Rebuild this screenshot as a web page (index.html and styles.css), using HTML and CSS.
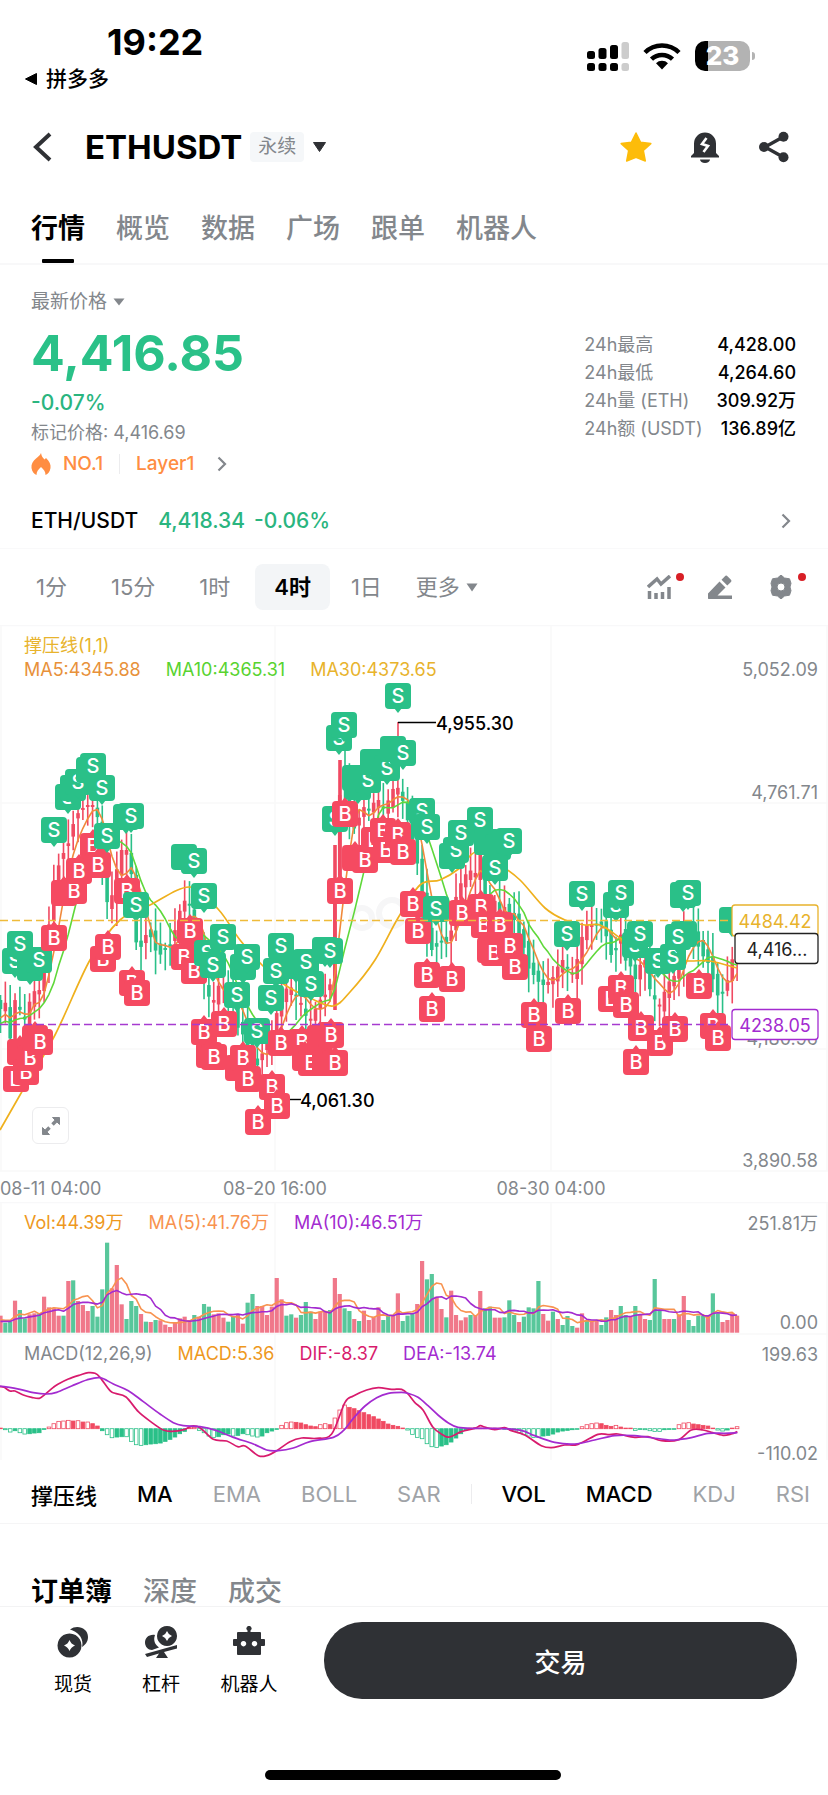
FILE: index.html
```html
<!DOCTYPE html>
<html lang="zh-CN">
<head>
<meta charset="utf-8">
<meta name="viewport" content="width=device-width, initial-scale=1">
<title>ETHUSDT 永续</title>
<link rel="stylesheet" href="styles.css">
</head>
<body>
<div class="status">
  <div class="status-left">
    <div class="clock">19:22</div>
    <a class="back-app" href="#"><svg width="14" height="14" viewBox="0 0 13 14"><path d="M12 1.5v11L1 7z" fill="#000" stroke="#000" stroke-linejoin="round"/></svg>拼多多</a>
  </div>
  <div class="status-right">
    <svg width="42" height="30" viewBox="0 0 42 30">
      <g fill="#000"><rect x="0" y="10" width="8" height="8" rx="2.5"/><rect x="11.5" y="7" width="8" height="11" rx="2.5"/><rect x="23" y="4" width="8" height="14" rx="2.5"/><rect x="0" y="22" width="8" height="8" rx="2.5"/><rect x="11.5" y="22" width="8" height="8" rx="2.5"/><rect x="23" y="22" width="8" height="8" rx="2.5"/></g>
      <g fill="#ccc"><rect x="34.5" y="1" width="7.5" height="17" rx="2.5"/><rect x="34.5" y="22" width="7.5" height="8" rx="2.5"/></g>
    </svg>
    <svg class="wifi" width="38" height="28" viewBox="0 0 38 28"><g fill="none" stroke="#000" stroke-width="4.5"><path d="M2 10.5a24 24 0 0 1 34 0"/><path d="M8.5 17.2a15 15 0 0 1 21 0"/></g><path d="M19 27.5l-6-6.3a8.5 8.5 0 0 1 12 0z"/></svg>
    <div class="battery"><span>23</span></div>
  </div>
</div>

<header class="header">
  <a class="back" href="#" aria-label="返回"><svg width="20" height="30" viewBox="0 0 20 30"><path d="M18 2L4 15l14 13" fill="none" stroke="#2f3135" stroke-width="4"/></svg></a>
  <h1 class="symbol">ETHUSDT</h1>
  <button class="contract" type="button"><span class="tag">永续</span><svg width="15" height="10" viewBox="0 0 14 10"><path d="M1 .5h12L7 9.5z" fill="#2f3135" stroke="#2f3135" stroke-linejoin="round"/></svg></button>
  <div class="header-actions">
    <button type="button" aria-label="收藏"><svg width="32" height="32" viewBox="0 0 32 32"><path d="M16 2l4.600 9.300 10.200 1.300-7.500 6.900 2 10.500L16 26.400 6.700 30l2-10.500-7.500-6.900 10.200-1.300z" fill="#fdbc0a" stroke="#fdbc0a" stroke-width="1.5" stroke-linejoin="round"/></svg></button>
    <button type="button" aria-label="提醒"><svg width="32" height="32" viewBox="0 0 32 32"><path d="M5 22V12.500a11 11 0 0 1 22 0V22l3 3v1.500H2V25z" fill="#2f3135"/><path d="M11 28.500h10a5 3.500 0 0 1-10 0z" fill="#2f3135"/><path d="M17.500 7l-4.500 6 6 2-4.500 6" fill="none" stroke="#fff" stroke-width="2.600"/></svg></button>
    <button type="button" aria-label="分享"><svg width="32" height="32" viewBox="0 0 32 32"><path d="M25 6L7 16l18 10" fill="none" stroke="#2f3135" stroke-width="3.500"/><g fill="#2f3135"><circle cx="25.500" cy="5.800" r="5"/><circle cx="6" cy="16" r="5"/><circle cx="25.500" cy="26.200" r="5"/></g></svg></button>
  </div>
</header>

<nav class="tabs">
  <a class="active" href="#">行情</a><a href="#">概览</a><a href="#">数据</a><a href="#">广场</a><a href="#">跟单</a><a href="#">机器人</a>
</nav>

<main>
  <section class="quote">
    <div class="quote-main">
      <button class="price-type" type="button">最新价格<svg width="12" height="8" viewBox="0 0 12 8"><path d="M.5 .5h11L6 7.500z" fill="#83878c"/></svg></button>
      <div class="price">4,416.85</div>
      <div class="change">-0.07%</div>
      <div class="mark">标记价格: 4,416.69</div>
      <a class="ranks" href="#">
        <svg width="20" height="24" viewBox="0 0 20 24"><path d="M10 1c.5 3.500 2 5 3.500 6.500L15 6c3.500 3.500 5 6.500 4.500 10-.5 3.500-2.500 6-5 7 0-3-1.500-5.500-4.500-8-3 2.500-4.500 5-4.500 8-2.500-1-4.500-3.500-5-7C0 12 2 9 5 6.500 7 4.800 9 3.500 10 1z" fill="#ff8d42"/></svg>
        <span>NO.1</span><i class="bar"></i><span>Layer1</span>
        <svg class="more" width="10" height="16" viewBox="0 0 10 16"><path d="M1.500 1.500L8 8l-6.500 6.500" fill="none" stroke="#83878c" stroke-width="2.200"/></svg>
      </a>
    </div>
    <dl class="stats">
      <dt>24h最高</dt><dd>4,428.00</dd>
      <dt>24h最低</dt><dd>4,264.60</dd>
      <dt>24h量 (ETH)</dt><dd>309.92万</dd>
      <dt>24h额 (USDT)</dt><dd>136.89亿</dd>
    </dl>
  </section>

  <a class="spot" href="#">
    <span class="pair">ETH/USDT</span><span class="up">4,418.34</span><span class="up pct">-0.06%</span>
    <svg width="10" height="16" viewBox="0 0 10 16"><path d="M1.500 1.500L8 8l-6.500 6.500" fill="none" stroke="#83878c" stroke-width="2.200"/></svg>
  </a>

  <div class="frames">
    <button type="button">1分</button><button type="button">15分</button><button type="button">1时</button><button class="active" type="button">4时</button><button type="button">1日</button><button class="more-frames" type="button">更多<svg width="12" height="9" viewBox="0 0 12 9"><path d="M.5 .5h11L6 8.500z" fill="#83878c"/></svg></button>
    <div class="tools">
      <button class="dot" type="button" aria-label="指标"><svg width="24" height="24" viewBox="0 0 24 24"><path d="M1 12l9-8 4 5 9-8" fill="none" stroke="#83878c" stroke-width="3.500"/><path d="M2.500 24v-8M9 24v-6M15.500 24v-7M22 24V12" fill="none" stroke="#83878c" stroke-width="3.500"/></svg></button>
      <button type="button" aria-label="画线"><svg width="24" height="24" viewBox="0 0 24 24"><g fill="#83878c"><path d="M11.500 6.500l6 6-8 8H24V24H1c-1 0-1-.5-1-1v-4.500z"/><path d="M13.500 4.800l3.200-3.400c1.200-1.200 2-1 3 0l3 3c1 1 1 1.800 0 2.800l-3.400 3.400z"/></g></svg></button>
      <button class="dot" type="button" aria-label="设置"><svg width="24" height="24" viewBox="0 0 24 24"><path fill-rule="evenodd" d="M12 0l3.500 3 5 .8L22 8.300 21 12l1 3.700-1.500 4.500-5 .8L12 24l-3.500-3-5-.8L2 15.700 3 12 2 8.300l1.500-4.500 5-.8zM12 8a4 4 0 1 0 0 8 4 4 0 0 0 0-8z" fill="#83878c" stroke="#83878c" stroke-linejoin="round"/></svg></button>
    </div>
  </div>

  <section class="panel">
    <svg id="price-chart" class="plot" viewBox="0 625 828 577"></svg>
    <div class="legend two-line">
      <span class="ma30 full">撑压线(1,1)</span>
      <span class="ma5">MA5:4345.88</span><span class="ma10">MA10:4365.31</span><span class="ma30">MA30:4373.65</span>
    </div>
    <button class="expand" type="button" aria-label="全屏"><svg width="20" height="20" viewBox="0 0 20 20"><g fill="#83878c" stroke="#83878c"><path d="M11.500 1.500h7v7zM1.500 11.500v7h7z" stroke-linejoin="round"/><path d="M16 4l-4.500 4.500M4 16l4.500-4.500" stroke-width="3.500"/></g></svg></button>
  </section>
  <section class="panel">
    <svg id="volume-chart" class="plot" viewBox="0 1202 828 135"></svg>
    <div class="legend"><span class="vol">Vol:44.39万</span><span class="vma5">MA(5):41.76万</span><span class="purple">MA(10):46.51万</span></div>
  </section>
  <section class="panel">
    <svg id="macd-chart" class="plot" viewBox="0 1337 828 128"></svg>
    <div class="legend tight"><span class="gray">MACD(12,26,9)</span><span class="vol">MACD:5.36</span><span class="dif">DIF:-8.37</span><span class="purple">DEA:-13.74</span></div>
  </section>

  <div class="indicators">
    <button class="on" type="button">撑压线</button><button class="on" type="button">MA</button><button type="button">EMA</button><button type="button">BOLL</button><button type="button">SAR</button><i class="bar"></i><button class="on" type="button">VOL</button><button class="on" type="button">MACD</button><button type="button">KDJ</button><button type="button">RSI</button>
  </div>

  <nav class="book-tabs"><a class="active" href="#">订单簿</a><a href="#">深度</a><a href="#">成交</a></nav>
</main>

<footer class="dock">
  <div class="dock-row">
    <a class="dock-item" href="#"><svg width="32" height="32" viewBox="0 0 32 32"><path d="M13 3.500C20-2 31 2 31 11c0 5-3 8-6 10 2-8-3-15-12-17.500z" fill="#2f3135"/><path d="M12.500 7.500a12 12 0 1 0 .01 0z" fill="#2f3135"/><path d="M12.500 14q1.500 4 5.500 5.500-4 1.500-5.500 5.500-1.500-4-5.500-5.500 4-1.500 5.500-5.500z" fill="#fff"/></svg>现货</a>
    <a class="dock-item" href="#"><svg width="32" height="32" viewBox="0 0 32 32"><g fill="#2f3135"><path d="M22 0a10 10 0 1 0 .01 0z"/><path d="M10 9C4 8 0 12 0 16.500c0 4 3 7.500 7 7.500l7-2.500c-4-3-6-7-4-12.500z"/><path d="M0 28l32-9v3.500L19 26l4 6H11l3-4.500L2 31z"/></g><path d="M22 5q1.300 3.700 5 5-3.700 1.300-5 5-1.300-3.700-5-5 3.700-1.300 5-5z" fill="#fff"/></svg>杠杆</a>
    <a class="dock-item" href="#"><svg width="32" height="32" viewBox="0 0 32 32"><path fill-rule="evenodd" fill="#2f3135" d="M14.500 4.500a2.500 2.500 0 1 1 3 0V6H27q1 0 1 1v6h3q1 0 1 1v5q0 1-1 1h-3v8q0 1-1 1H5q-1 0-1-1v-8H1q-1 0-1-1v-5q0-1 1-1h3V7q0-1 1-1h9.500zM10.500 15a2.700 2.700 0 1 0 .01 0zM21.500 15a2.700 2.700 0 1 0 .01 0z"/></svg>机器人</a>
    <button class="trade" type="button">交易</button>
  </div>
  <div class="home-bar"></div>
</footer>
<script src="chart.js"></script>
</body>
</html>
```

FILE: styles.css
```css
* { box-sizing: border-box; }
body {
  margin: 0;
  min-height: 100vh;
  display: flex;
  flex-direction: column;
  background: #fff;
  color: #000;
  font-family: Inter, "Noto Sans CJK SC", sans-serif;
}
a { color: inherit; text-decoration: none; }
button { margin: 0; padding: 0; border: 0; background: none; font: inherit; color: inherit; cursor: pointer; }
svg { display: block; flex: none; }
h1, dl, dd { margin: 0; }

.status { display: flex; justify-content: space-between; padding: 22px 78px 26px 24px; }
.clock { margin-left: 83px; font-size: 36px; line-height: 40px; font-weight: 700; }
.back-app { display: flex; align-items: center; gap: 8px; margin-top: 3px; font-size: 21px; line-height: 28px; font-weight: 500; }
.status-right { display: flex; align-items: center; gap: 14px; height: 68px; }
.battery {
  position: relative;
  width: 55px;
  height: 30px;
  border-radius: 10px;
  background: linear-gradient(90deg, #000 13px, #b3b3b3 13px);
  color: #fff;
  font-size: 26px;
  line-height: 30px;
  font-weight: 800;
  text-align: center;
}
.battery::after { content: ""; position: absolute; right: -5px; top: 11px; width: 3px; height: 8px; border-radius: 0 3px 3px 0; background: #b3b3b3; }

.header { display: flex; align-items: center; height: 56px; padding: 0 38px 0 32px; }
.symbol { margin-left: 33px; font-size: 33px; line-height: 40px; font-weight: 700; }
.contract { display: flex; align-items: center; gap: 8px; margin-left: 8px; }
.tag { padding: 0 8px; border-radius: 4px; background: #f5f7f9; color: #83878c; font-size: 19px; line-height: 30px; }
.header-actions { display: flex; gap: 37px; margin-left: auto; }

.tabs { display: flex; gap: 31px; padding: 36px 31px 0; border-bottom: 2px solid #f8f8f9; color: #83878c; font-size: 27px; line-height: 36px; font-weight: 500; }
.tabs a { padding-bottom: 16px; }
.tabs .active { position: relative; color: #000; font-weight: 700; }
.tabs .active::after { content: ""; position: absolute; left: 11px; right: 11px; bottom: 0; height: 4px; border-radius: 1px; background: #000; }

.quote { display: flex; justify-content: space-between; padding: 23px 32px 0 31px; }
.price-type { display: flex; align-items: center; gap: 6px; color: #83878c; font-size: 19px; line-height: 28px; }
.price { margin-top: 9px; color: #2ac188; font-size: 50px; line-height: 56px; font-weight: 700; }
.change { margin-top: 8px; color: #2ab57f; font-size: 21px; line-height: 28px; font-weight: 500; }
.mark { margin-top: 2px; color: #83878c; font-size: 18px; line-height: 28px; }
.ranks { display: flex; align-items: center; margin-top: 3px; color: #ff8d42; font-size: 19px; line-height: 28px; font-weight: 500; }
.ranks span { margin-left: 12px; }
.ranks .more { margin-left: 23px; }
.bar { width: 1px; height: 20px; background: #ececee; }
.ranks .bar { margin: 0 4px 0 16px; }
.stats { display: grid; grid-template-columns: auto auto; column-gap: 14px; align-content: start; margin-top: 43px; font-size: 18px; line-height: 28px; }
.stats dt { color: #83878c; }
.stats dd { text-align: right; font-weight: 500; }

.spot { display: flex; align-items: center; height: 56px; margin-top: 15px; padding: 0 37px 0 31px; border-bottom: 1px solid #f9f9fa; font-size: 21px; font-weight: 500; }
.up { margin-left: 20px; color: #2ab57f; }
.pct { margin-left: 9px; }
.spot svg { margin-left: auto; }

.frames { display: flex; align-items: center; height: 76px; padding: 0 35px 0 14px; color: #83878c; font-size: 22px; line-height: 30px; }
.frames > button { padding: 8px 22px; border-radius: 8px; }
.frames > .active { margin-left: 3px; padding: 8px 19px; background: #f3f5f7; color: #000; font-weight: 600; }
.frames > .active + button { padding-left: 21px; padding-right: 20px; }
.frames > .more-frames { display: flex; align-items: center; gap: 6px; padding-left: 14px; }
.tools { display: flex; gap: 37px; margin-left: auto; }
.dot { position: relative; }
.dot::after { content: ""; position: absolute; left: 29px; top: -2px; width: 8px; height: 8px; border-radius: 50%; background: #d81f26; }

.panel { position: relative; }
.plot { width: 100%; height: auto; font-family: Inter, "Noto Sans CJK SC", sans-serif; }
.legend { position: absolute; left: 24px; top: 9px; display: flex; gap: 25px; font-size: 18px; line-height: 24px; white-space: nowrap; }
.two-line { flex-wrap: wrap; row-gap: 0; }
.tight { top: 5px; }
.full { flex-basis: 100%; }
.ma5 { color: #e8913a; }
.ma10 { color: #58d32f; }
.ma30 { color: #e8b32c; }
.vol { color: #ee981d; }
.vma5 { color: #f8934f; }
.purple { color: #a32bd0; }
.dif { color: #d81b6d; }
.gray { color: #83878c; }
.expand { position: absolute; left: 32px; bottom: 58px; display: flex; align-items: center; justify-content: center; width: 37px; height: 37px; border: 1px solid #ececee; border-radius: 6px; background: #fff; }
.axis { font-size: 18px; fill: #83878c; }
.extreme { font-size: 18px; font-weight: 500; fill: #000; }
.badge-text { font-size: 20px; font-weight: 500; fill: #fff; text-anchor: middle; }
.price-tag { font-size: 18px; text-anchor: middle; }
.end { text-anchor: end; }
.middle { text-anchor: middle; }

.indicators { display: flex; align-items: center; gap: 40px; height: 59px; padding: 0 20px 0 31px; border-bottom: 1px solid #f5f5f6; color: #a0a3a7; font-size: 22px; white-space: nowrap; overflow: hidden; }
.indicators .on { color: #000; font-weight: 500; }
.indicators .bar { flex: none; margin: 0 -10px; }

.book-tabs { display: flex; gap: 31px; padding: 54px 31px 0; color: #83878c; font-size: 27px; line-height: 28px; font-weight: 500; }
.book-tabs .active { color: #000; font-weight: 700; }

.dock { position: sticky; bottom: 0; display: flex; flex-direction: column; height: 189px; margin-top: auto; padding: 0 31px 15px 29px; border-top: 1px solid #f3f3f4; background: #fff; }
.dock-row { display: flex; }
.dock-item { display: flex; flex-direction: column; align-items: center; gap: 14px; width: 88px; padding-top: 19px; font-size: 19px; line-height: 26px; }
.trade { flex: 1; height: 77px; margin: 15px 0 0 31px; border-radius: 38px; background: #2f3135; color: #fff; font-size: 26px; font-weight: 500; }
.home-bar { width: 296px; max-width: 60%; height: 10px; margin: auto auto 0; border-radius: 5px; background: #000; }
```

FILE: chart.js
```js
const NS = "http://www.w3.org/2000/svg";
const UP = "#f04a62", DOWN = "#2ac088";
const STEP = 4.846, COUNT = 153;
const xAt = i => 0.5 + i * STEP;

function add(parent, name, attrs, text) {
  const el = document.createElementNS(NS, name);
  for (const key in attrs) el.setAttribute(key, attrs[key]);
  if (text !== undefined) el.textContent = text;
  parent.appendChild(el);
  return el;
}
const line = (p, x1, y1, x2, y2, stroke, extra) => add(p, "line", Object.assign({ x1, y1, x2, y2, stroke }, extra));
const label = (p, x, y, text, cls, fill) => {
  const el = add(p, "text", { x, y, class: cls }, text);
  if (fill) el.style.fill = fill;
};
const poly = (p, pts, stroke, width) => add(p, "polyline", {
  points: pts.map(q => q[0].toFixed(1) + "," + q[1].toFixed(1)).join(" "),
  fill: "none", stroke, "stroke-width": width || 1.6, "stroke-linejoin": "round"
});
// Smooth curve through points (Catmull-Rom converted to cubic segments)
function curve(p, pts, stroke) {
  let d = "M" + pts[0];
  for (let i = 0; i < pts.length - 1; i++) {
    const a = pts[i - 1] || pts[i], b = pts[i], c = pts[i + 1], e = pts[i + 2] || c;
    d += `C${b[0] + (c[0] - a[0]) / 6},${b[1] + (c[1] - a[1]) / 6} ${c[0] - (e[0] - b[0]) / 6},${c[1] - (e[1] - b[1]) / 6} ${c}`;
  }
  add(p, "path", { d, fill: "none", stroke, "stroke-width": 1.7 });
}
function average(values, span, pad) {
  return values.map((_, i) => {
    let sum = 0;
    for (let k = 0; k < span; k++) sum += i - k >= 0 ? values[i - k] : pad;
    return sum / span;
  });
}
function grid(svg, top, bottom, rows) {
  rows.forEach(y => line(svg, 0, y, 828, y, "#f8f8f9", { "stroke-width": 1.5 }));
  [1, 275, 551, 827].forEach(x => line(svg, x, top, x, bottom, "#f8f8f9", { "stroke-width": 1.5 }));
}

/* Price panel */
(function () {
  const svg = document.getElementById("price-chart");
  grid(svg, 625, 1171, [625.5, 803, 1049, 1171]);
  add(svg, "circle", { cx: 392, cy: 913, r: 13, fill: "none", stroke: "#f6f6f7", "stroke-width": 6 });
  add(svg, "circle", { cx: 362, cy: 918, r: 10, fill: "none", stroke: "#f6f6f7", "stroke-width": 6 });
  label(svg, 818, 676, "5,052.09", "axis end");
  label(svg, 818, 799, "4,761.71", "axis end");
  label(svg, 818, 1045, "4,180.96", "axis end");
  label(svg, 818, 1167, "3,890.58", "axis end");
  label(svg, 0, 1195, "08-11 04:00", "axis");
  label(svg, 275, 1195, "08-20 16:00", "axis middle");
  label(svg, 551, 1195, "08-30 04:00", "axis middle");

  // closing level at every five units of x
  const close = [1010,1000,1040,1000,1010,1020,1000,990,990,960,915,880,860,850,840,815,812,805,805,805,830,
    900,905,880,850,850,850,940,950,935,935,950,955,950,945,930,910,900,905,940,950,985,1000,1000,980,990,1000,
    1010,1040,1030,1060,1070,1060,1045,1040,1020,1000,990,985,995,1000,1015,1020,1010,1000,995,985,880,790,790,
    820,830,815,805,810,800,800,810,795,785,790,810,830,850,880,925,950,950,940,945,940,900,885,875,870,875,850,
    900,920,900,925,905,920,920,940,950,975,975,985,985,980,975,960,960,975,970,945,925,925,925,925,930,955,955,
    930,960,965,980,965,960,990,1000,1005,990,980,975,960,925,930,940,950,960,965,990,1000,985,975,940];
  const at = x => {
    const k = Math.min(x / 5, close.length - 1), f = Math.floor(k), g = Math.min(f + 1, close.length - 1);
    return close[f] + (close[g] - close[f]) * (k - f);
  };
  const level = [];
  for (let i = 0; i < COUNT; i++) level.push(at(xAt(i)));
  for (let i = 0; i < COUNT; i++) {
    const jitter = Math.sin(i * 12.9) * 7;
    const open = (i ? level[i - 1] : 1000) + jitter, end = level[i];
    const color = end < open ? UP : DOWN, x = xAt(i);
    const high = Math.min(open, end) - 5 - Math.abs(Math.sin(i * 7.3)) * 19;
    const low = Math.max(open, end) + 5 + Math.abs(Math.cos(i * 5.1)) * 19;
    line(svg, x, high, x, low, color, { "stroke-width": 1.6 });
    add(svg, "rect", { x: x - 1.8, y: Math.min(open, end), width: 3.6, height: Math.max(2, Math.abs(open - end)), fill: color });
  }
  line(svg, 398, 722, 398, 760, UP, { "stroke-width": 1.6 });
  line(svg, 335, 845, 335, 1010, UP, { "stroke-width": 3.6 });
  line(svg, 340, 760, 340, 880, UP, { "stroke-width": 3.6 });
  line(svg, 345, 735, 345, 800, DOWN, { "stroke-width": 1.6 });

  poly(svg, average(level, 5, 1020).map((y, i) => [xAt(i), y]), "#f08a3c");
  poly(svg, average(level, 10, 1025).map((y, i) => [xAt(i), y]), "#5fd83a");
  curve(svg, [[0,1130],[20,1095],[55,1035],[90,960],[120,920],[150,905],[190,887],[218,909],[240,940],[262,965],
    [285,985],[310,998],[333,1006],[350,992],[375,960],[398,918],[420,885],[440,880],[460,868],[476,852],[500,865],
    [520,880],[545,908],[565,920],[585,925],[600,925],[620,938],[640,955],[665,960],[690,961],[710,961],[737,968]], "#efb01d");

  // lower-case kinds are stacked badges that carry no letter
  function badge(mark, x, y) {
    const kind = mark.toUpperCase(), fill = kind === "S" ? "#2ac088" : "#f54a61";
    add(svg, "rect", { x: x - 13, y: y - 13, width: 26, height: 26, rx: 4, fill });
    const tip = kind === "S" ? `M${x - 4} ${y + 12}h8l-4 5z` : `M${x - 4} ${y - 12}h8l-4 -5z`;
    add(svg, "path", { d: tip, fill });
    if (mark === kind) label(svg, x, y + 7, kind, "badge-text");
  }
  const marks = `S15,961 s30,968 b20,1052 B16,1079 S20,944 B26,1072 B30,1058 b35,1038 S39,960 B40,1042 S54,830 B54,938
    b64,893 S68,797 s73,788 B74,891 S78,782 B79,871 s89,770 S93,766 B93,846 B98,865 S102,788 S107,836 B103,959 B108,947
    s126,817 S131,816 B127,891 S136,905 B132,983 B137,993 s184,857 S194,861 B184,957 B190,931 B194,971 S204,896
    B204,1032 S207,953 b209,1055 S213,965 B214,1057 S223,937 B224,1024 S237,995 b238,1068 s243,967 B243,1058 S247,957
    B248,1079 S257,1031 B258,1122 S271,998 B272,1087 S276,971 B277,1106 S281,946 B281,1043 s296,966 B302,1042 S306,962
    b305,1058 S311,984 B311,1063 b320,1038 b325,1063 s325,950 S330,951 B331,1035 B335,1063 S335,819 S339,738 B340,891
    S344,725 B345,814 s355,778 b355,858 s358,787 B365,860 S368,780 B374,840 s373,762 B383,831 B386,850 S387,768
    s393,749 S398,696 B398,835 S403,753 B403,852 B413,904 B418,931 S422,811 S427,827 B427,975 B432,1009 S436,909
    s452,856 B452,979 S456,850 S461,833 B462,913 S480,820 B481,907 B484,925 s487,842 b490,950 B494,953 s498,847
    B500,925 S509,841 S495,868 B510,946 B515,967 B534,1015 B539,1039 S567,934 B568,1011 S582,894 B611,999 S616,905
    B621,988 S621,893 B626,1005 S635,945 B636,1062 S640,934 B641,1028 S658,961 B660,1043 s684,934 S673,957 B675,1029
    S678,937 s683,895 S688,893 B699,986 B713,1026 B718,1038 s732,920`;
  marks.trim().split(/\s+/).forEach(m => {
    const [x, y] = m.slice(1).split(",").map(Number);
    badge(m[0], x, y);
  });

  line(svg, 0, 920.5, 732, 920.5, "#efbb3a", { "stroke-dasharray": "8 4", "stroke-width": 1.3 });
  line(svg, 0, 1024.5, 732, 1024.5, "#a63bd0", { "stroke-dasharray": "8 4", "stroke-width": 1.3 });
  const tag = (x, y, h, stroke, text) => {
    add(svg, "rect", { x, y, width: 818 - x, height: h, rx: 3, fill: "#fff", stroke, "stroke-width": 1.3 });
    label(svg, x === 732 ? 775 : 777, y + h / 2 + 7, text, "price-tag", stroke);
  };
  tag(732, 905, 31, "#e8b32c", "4484.42");
  tag(735, 933.5, 30, "#222", "4,416...");
  tag(732, 1009.5, 30, "#a32bd0", "4238.05");

  line(svg, 398, 722.5, 436, 722.5, "#000", { "stroke-width": 1.4 });
  label(svg, 436, 730, "4,955.30", "extreme");
  line(svg, 290, 1099.5, 301, 1099.5, "#000", { "stroke-width": 1.4 });
  label(svg, 300, 1107, "4,061.30", "extreme");
})();

/* Volume panel: direction and top edge of each bar, in thirds of a unit */
(function () {
  const svg = document.getElementById("volume-chart");
  grid(svg, 1202, 1337, [1202.5, 1334]);
  const bars = `r347 g368 g365 r302 g330 g355 r343 r340 g340 r290 r322 r325 r347 g347 r243 g241 r303 r315 r333 g318 g350
    g268 g128 r265 r195 r313 g357 g303 g318 r342 g365 r366 g360 r361 r374 r381 r368 r355 r350 r360 g345 r350 g312 g320
    r343 r340 r353 g365 g350 r345 r371 g308 g282 r318 r318 r345 r320 r234 r298 g347 g343 r353 g345 g306 g335 r357 r335
    r335 g330 r234 r282 g325 g333 r357 g363 r332 r360 r350 r322 g360 g348 r345 r280 g363 g347 g340 r312 r183 g238 g222
    r290 r327 g352 r272 r345 r361 r352 g345 r345 r273 g325 g320 r353 r353 g352 g301 g345 r366 g350 g322 g325 g243 r342
    r362 g335 r357 g375 g348 g378 r383 r340 g360 r362 r362 g375 g352 r330 r345 g318 g345 r348 g318 r345 r357 g360 g237
    g330 r357 r357 g357 r343 r288 g360 g378 g347 g347 r345 g280 g340 r366 r360 r340 r347`.trim().split(/\s+/);
  const tops = bars.map(b => 1200 + Number(b.slice(1)) / 3);
  bars.forEach((b, i) => add(svg, "rect", {
    x: xAt(i) - 2.1, y: tops[i], width: 4.2, height: 1332.7 - tops[i], fill: b[0] === "r" ? "#f0788a" : "#58c79b"
  }));
  poly(svg, average(tops, 5, 1321).map((y, i) => [xAt(i), y]), "#f8934f");
  poly(svg, average(tops, 10, 1322).map((y, i) => [xAt(i), y]), "#a32bd0");
  label(svg, 818, 1230, "251.81万", "axis end");
  label(svg, 818, 1329, "0.00", "axis end");
})();

/* MACD panel */
(function () {
  const svg = document.getElementById("macd-chart");
  grid(svg, 1337, 1460, []);
  const hist = [0,-3,-10,-6,-12,-16,-15,-13,-12,-2,5,15,22,23,25,23,24,20,20,15,8,-6,-18,-27,-25,-24,-24,-38,-48,-50,
    -48,-46,-45,-43,-38,-32,-25,-15,-8,3,4,-5,-12,-22,-26,-24,-18,-16,-22,-20,-15,-18,-22,-25,-22,-12,-7,-2,10,18,20,
    19,17,12,8,6,12,15,12,32,56,71,64,60,54,48,42,36,29,22,14,10,7,2,-4,-17,-26,-30,-45,-54,-56,-52,-48,-40,-28,-15,
    -4,1,3,2,1,1,1,1,-1,-2,-7,-12,-18,-22,-26,-26,-22,-20,-16,-10,-7,-5,-3,-1,6,12,15,17,15,10,7,10,5,1,0,-5,-2,-3,
    -6,-8,-8,-3,-2,-1,12,17,18,14,12,10,8,0,-4,-7,-4,1,6];
  const base = 1428.7;
  hist.forEach((v, i) => {
    const h = Math.max(0.6, Math.abs(v) / 3), color = v >= 0 ? UP : DOWN;
    const growing = i > 0 && Math.abs(v) >= Math.abs(hist[i - 1]);
    add(svg, "rect", {
      x: xAt(i) - 1.8, y: v >= 0 ? base - h : base, width: 3.6, height: h,
      fill: growing ? "#fff" : color, stroke: color, "stroke-width": 0.8
    });
  });
  const left = p => [p[0] / 3, 1200 + p[1] / 3], right = p => [408 + p[0] / 3, 1200 + p[1] / 3];
  const dea = [[0,558],[60,568],[100,578],[140,582],[170,577],[215,558],[260,540],[300,533],[340,552],[385,572],
    [430,605],[480,642],[520,668],[550,677],[600,680],[650,692],[700,712],[760,732],[800,750],[835,752],[880,744],
    [930,725],[1000,712],[1030,692],[1060,655],[1095,618],[1130,593],[1165,580],[1205,577]].map(left).concat(
    [[0,580],[30,592],[60,617],[90,645],[120,668],[150,682],[200,685],[260,685],[320,688],[350,694],[380,707],
    [440,727],[500,732],[560,720],[620,707],[680,707],[760,717],[800,720],[850,713],[900,700],[950,700],[988,698]].map(right));
  const dif = [[0,560],[12,562],[30,573],[45,573],[70,585],[95,592],[118,595],[135,583],[160,562],[175,552],[205,537],
    [240,525],[265,518],[285,520],[300,532],[330,572],[345,580],[378,591],[415,635],[455,667],[490,690],[515,694],
    [555,688],[575,678],[600,683],[640,718],[680,723],[713,740],[735,738],[775,767],[800,767],[830,752],[870,725],
    [905,714],[950,715],[995,702],[1035,607],[1060,588],[1100,570],[1135,563],[1175,568],[1205,568]].map(left).concat(
    [[0,582],[20,607],[45,630],[75,682],[105,705],[125,711],[160,695],[200,685],[217,677],[230,681],[260,689],
    [290,683],[310,692],[350,705],[400,737],[430,743],[470,735],[510,733],[570,703],[600,704],[630,702],[680,712],
    [720,710],[760,722],[810,720],[850,690],[885,690],[910,697],[945,706],[970,702],[988,695]].map(right));
  curve(svg, dif, "#d81b6d");
  curve(svg, dea, "#a32bd0");
  label(svg, 818, 1361, "199.63", "axis end");
  label(svg, 818, 1460, "-110.02", "axis end");
})();
```
